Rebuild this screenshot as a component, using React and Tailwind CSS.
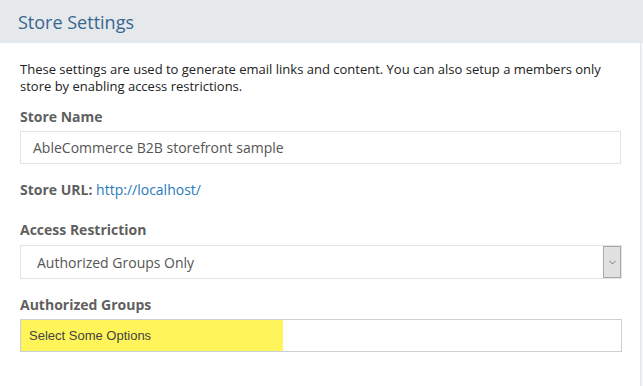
import { ChevronDown } from 'lucide-react'

const font = { fontFamily: '"Open Sans", "Liberation Sans", sans-serif' }

export default function App() {
  const label = 'block text-[14px] font-bold leading-[20px] text-[#5f5f5f]'

  return (
    <div className="h-[386px] w-[643px] overflow-hidden bg-[#f4f5f6]" style={font}>
      <div className="flex h-[43px] items-center bg-[#e6e9ec] px-[18px]">
        <h1 className="text-[18px] leading-none text-[#36668f]">Store Settings</h1>
      </div>

      <div className="h-[343px] w-[641px] rounded-tl-[3px] border-r border-[#e2e4e6] bg-white px-5 pt-[18px]">
        <p className="text-[13px] leading-[17px] text-[#222]">
          These settings are used to generate email links and content. You can also setup a members only
          store by enabling access restrictions.
        </p>

        <label className={`${label} mt-3`}>Store Name</label>
        <div className="mt-1 flex h-[33px] w-[601px] items-center border border-[#e3e3e3] px-3 text-[14px] text-[#555]">
          AbleCommerce B2B storefront sample
        </div>

        <div className="mt-4 text-[14px] leading-[20px]">
          <span className="font-bold text-[#5f5f5f]">Store URL:</span>{' '}
          <a href="#" className="text-[#2a7ab9]">http://localhost/</a>
        </div>

        <label className={`${label} mt-5`}>Access Restriction</label>
        <div className="mt-[5px] flex h-[34px] w-[602px] items-stretch border border-[#e3e3e3]">
          <div className="flex flex-1 items-center pl-4 text-[14px] text-[#555]">Authorized Groups Only</div>
          <div className="flex w-[18px] items-center justify-center border border-[#a9a9a9] bg-[#e1e1e1]">
            <ChevronDown size={11} strokeWidth={1.5} className="text-[#444]" />
          </div>
        </div>

        <label className={`${label} mt-4`}>Authorized Groups</label>
        <div className="mt-1 flex h-[33px] w-[602px] border border-[#c9d0d6]">
          <div
            className="flex w-[262px] items-center bg-[#fff45a] pl-2 text-[13px] text-[#444]"
            style={{ fontFamily: '"Liberation Sans", Arial, sans-serif' }}
          >
            Select Some Options
          </div>
        </div>
      </div>
    </div>
  )
}
